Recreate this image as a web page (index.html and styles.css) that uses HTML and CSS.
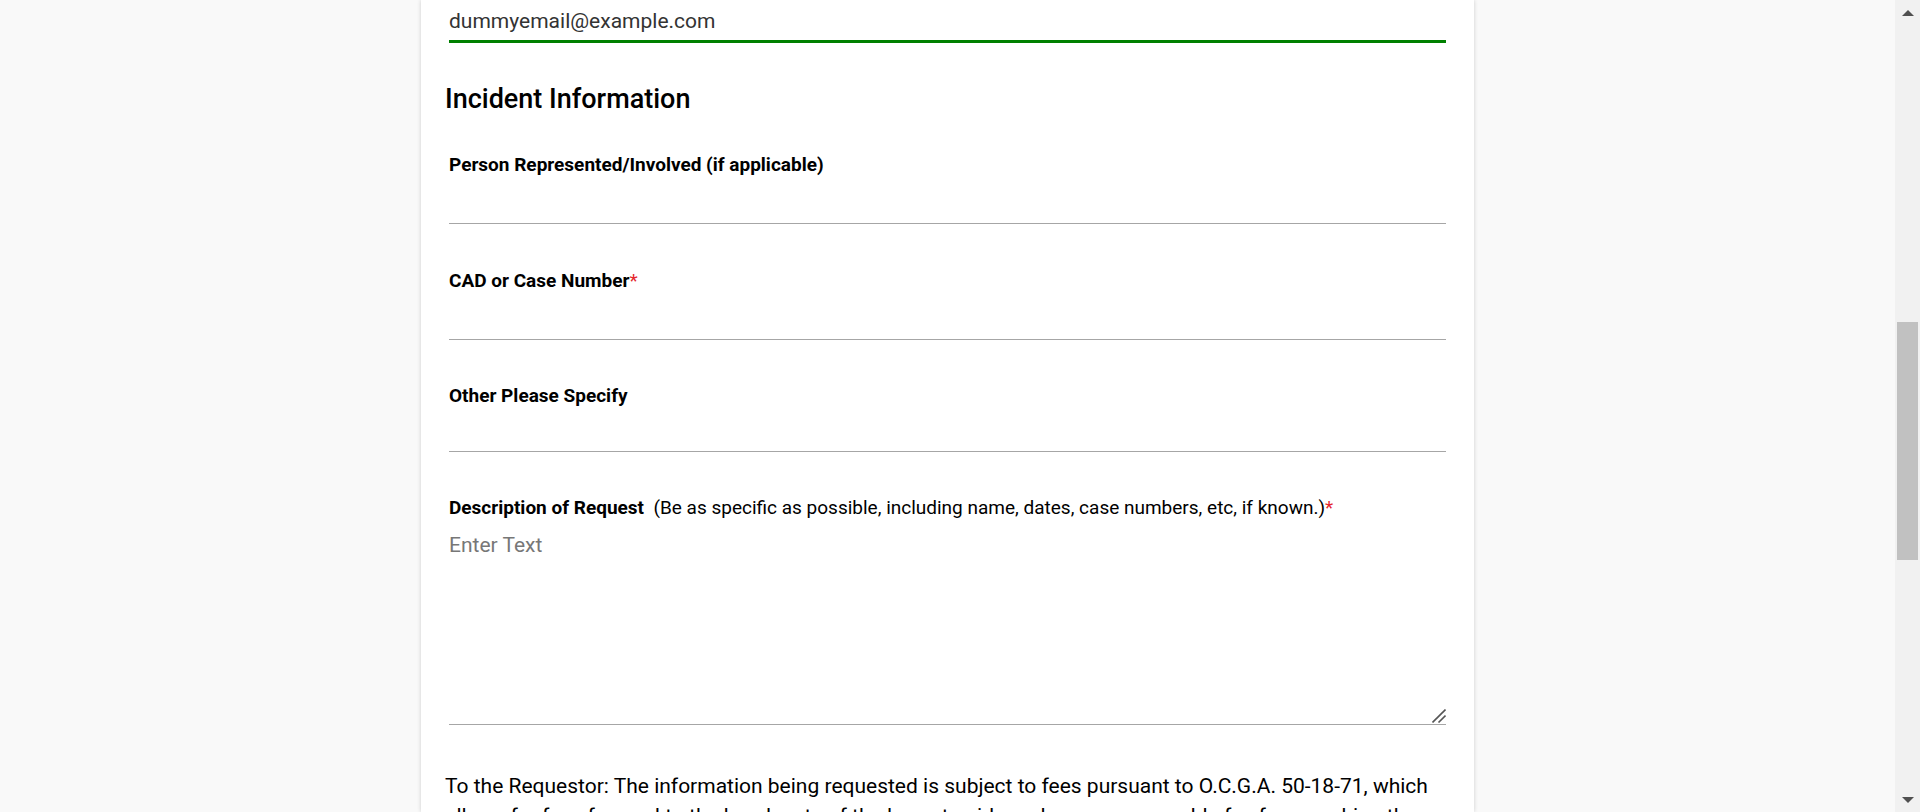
FILE: index.html
```html
<!DOCTYPE html>
<html lang="en">
<head>
<meta charset="utf-8">
<title>Records Request</title>
<link rel="stylesheet" href="styles.css">
</head>
<body>
<div class="viewport">
  <main class="main">
    <div class="card">
      <div class="field email-field">
        <input class="text-input email-input" type="text" value="dummyemail@example.com">
      </div>
      <h2 class="section-title">Incident Information</h2>
      <div class="field field-person">
        <label class="label">Person Represented/Involved (if applicable)</label>
        <input class="text-input line-input" type="text">
      </div>
      <div class="field field-case">
        <label class="label">CAD or Case Number<span class="req">*</span></label>
        <input class="text-input line-input" type="text">
      </div>
      <div class="field field-other">
        <label class="label">Other Please Specify</label>
        <input class="text-input line-input short" type="text">
      </div>
      <div class="field field-desc">
        <label class="label">Description of Request&nbsp; <span class="hint">(Be as specific as possible, including name, dates, case numbers, etc, if known.)</span><span class="req">*</span></label>
        <div class="area-wrap">
          <textarea class="text-area" placeholder="Enter Text"></textarea>
          <svg class="grip" width="14" height="14" viewBox="0 0 14 14" aria-hidden="true">
            <line x1="13.5" y1="0.5" x2="0.5" y2="13.5" stroke="#555" stroke-width="1.6"/>
            <line x1="13.5" y1="6.5" x2="6.5" y2="13.5" stroke="#555" stroke-width="1.6"/>
          </svg>
        </div>
      </div>
      <p class="notice">To the Requestor: The information being requested is subject to fees pursuant to O.C.G.A. 50-18-71, which allows for fees forward to the hourly rate of the lowest paid employee, a reasonable fee for searching the records requested.</p>
    </div>
  </main>
  <div class="scrollbar">
    <div class="sb-btn"><span class="arrow-up"></span></div>
    <div class="sb-track"><div class="sb-thumb"></div></div>
    <div class="sb-btn"><span class="arrow-down"></span></div>
  </div>
</div>
</body>
</html>
```

FILE: styles.css
```css
html, body {
  margin: 0;
  padding: 0;
  height: 812px;
  overflow: hidden;
}
body {
  font-family: Roboto, "Liberation Sans", Arial, sans-serif;
  background: #f9f9f9;
  color: #000;
}
.viewport {
  display: flex;
  height: 812px;
}
.main {
  flex: 1;
  display: flex;
  justify-content: center;
  overflow: hidden;
}
.card {
  width: 1053px;
  box-sizing: border-box;
  background: #fff;
  box-shadow: 0 0 4px rgba(0, 0, 0, 0.18);
  padding: 0 24px;
  height: 812px;
  overflow: hidden;
}
.field {
  margin: 0 4px;
  display: flex;
  flex-direction: column;
}
.text-input {
  display: block;
  box-sizing: border-box;
  width: 100%;
  border: none;
  outline: none;
  background: transparent;
  font-family: Roboto, "Liberation Sans", Arial, sans-serif;
  font-size: 21px;
  color: #333;
  padding: 0;
}
.email-input {
  height: 43px;
  padding-top: 2px;
  border-bottom: 3px solid #008000;
}
.section-title {
  margin: 40px 0 0 0;
  font-size: 27px;
  font-weight: 500;
  line-height: 33px;
  color: #000;
}
.field-person { margin-top: 38px; }
.field-case { margin-top: 46px; }
.field-other { margin-top: 45px; }
.field-desc { margin-top: 45px; }
.label {
  display: block;
  font-size: 19px;
  font-weight: 700;
  line-height: 22px;
  color: #000;
}
.hint {
  font-weight: 400;
}
.req {
  color: #e4262c;
  font-weight: 400;
}
.line-input {
  height: 48px;
  border-bottom: 1px solid #a6a6a6;
}
.line-input.short {
  height: 45px;
}
.area-wrap {
  position: relative;
}
.text-area {
  display: block;
  box-sizing: border-box;
  width: 100%;
  height: 206px;
  padding: 14px 0 0 0;
  border: none;
  border-bottom: 1px solid #a6a6a6;
  outline: none;
  font-family: Roboto, "Liberation Sans", Arial, sans-serif;
  font-size: 21px;
  color: #333;
  background: transparent;
  resize: none;
}
.text-area::placeholder {
  color: #777;
}
.grip {
  position: absolute;
  right: 0;
  bottom: 2px;
  pointer-events: none;
}
.notice {
  margin: 46px 0 0 0;
  font-size: 21px;
  line-height: 30px;
  color: #000;
}
.scrollbar {
  width: 25px;
  background: #f1f1f1;
  display: flex;
  flex-direction: column;
}
.sb-btn {
  height: 25px;
  display: flex;
  align-items: center;
  justify-content: center;
}
.arrow-up, .arrow-down {
  width: 0;
  height: 0;
  border-left: 6px solid transparent;
  border-right: 6px solid transparent;
}
.arrow-up { border-bottom: 6px solid #505050; }
.arrow-down { border-top: 6px solid #505050; }
.sb-track {
  flex: 1;
  padding: 0 2px;
}
.sb-thumb {
  margin-top: 297px;
  height: 238px;
  background: #c1c1c1;
}
```
